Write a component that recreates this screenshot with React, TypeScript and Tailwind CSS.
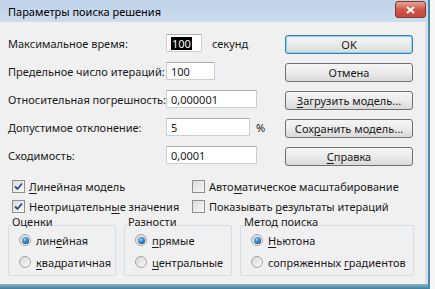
import React from 'react';

const Mn: React.FC<{ text: string; at: number }> = ({ text, at }) => (
  <>
    {text.slice(0, at)}
    <span className="underline underline-offset-2">{text.charAt(at)}</span>
    {text.slice(at + 1)}
  </>
);

const Field: React.FC<{ width: string; children?: React.ReactNode }> = ({ width, children }) => (
  <div
    className={`${width} h-[18px] bg-white border border-[#c8ced6] border-t-[#abadb3] flex items-center pl-[4px] text-[11px] leading-none`}
  >
    {children}
  </div>
);

const Button: React.FC<{ children: React.ReactNode; primary?: boolean }> = ({ children, primary }) => (
  <div
    className={`w-[128px] h-[19px] rounded-[3px] border ${
      primary ? 'border-[#3c7fb1] shadow-[inset_0_0_0_1px_#7fd6f5]' : 'border-[#707070]'
    } bg-gradient-to-b from-[#f4f4f4] via-[#ebebeb] to-[#d9d9d9] flex items-center justify-center text-[11px] leading-none`}
  >
    {children}
  </div>
);

const CheckBox: React.FC<{ checked?: boolean; children: React.ReactNode }> = ({ checked, children }) => (
  <div className="flex items-center h-[20px]">
    <div className="w-[13px] h-[13px] border border-[#8e8f8f] bg-gradient-to-br from-[#dcdcdc] to-[#f8f8f8] flex items-center justify-center shrink-0">
      {checked && (
        <svg width="9" height="9" viewBox="0 0 9 9">
          <path d="M1 4.5 L3.5 7 L8 1.5" fill="none" stroke="#2b4d8c" strokeWidth="1.8" />
        </svg>
      )}
    </div>
    <span className="ml-[4px] text-[11px] leading-none whitespace-nowrap">{children}</span>
  </div>
);

const Radio: React.FC<{ checked?: boolean; children: React.ReactNode }> = ({ checked, children }) => (
  <div className="flex items-center h-[22px]">
    <div className="w-[12px] h-[12px] rounded-full border border-[#a6a6a6] bg-gradient-to-br from-[#d9d9d9] to-[#f7f7f7] flex items-center justify-center shrink-0">
      {checked && (
        <div className="w-[7px] h-[7px] rounded-full bg-[radial-gradient(circle_at_40%_35%,#8fd0f8,#1f6cb0_60%,#123d6c)]" />
      )}
    </div>
    <span className="ml-[5px] text-[11px] leading-none whitespace-nowrap">{children}</span>
  </div>
);

const Group: React.FC<{ title: string; width: string; children: React.ReactNode }> = ({ title, width, children }) => (
  <div className={`${width} flex flex-col`}>
    <div className="text-[11px] leading-none pl-[4px] h-[9px] relative z-10">{title}</div>
    <div className="border border-[#d5dfe5] rounded-[2px] pt-[3px] pb-[2px] pl-[10px] flex flex-col">{children}</div>
  </div>
);

const Row: React.FC<{ label: string; children: React.ReactNode }> = ({ label, children }) => (
  <div className="flex items-center h-[18px]">
    <div className="w-[158px] text-[11px] leading-none whitespace-nowrap">{label}</div>
    {children}
  </div>
);

const App: React.FC = () => {
  return (
    <div className="w-[435px] h-[289px] bg-[#f7f7f7] overflow-hidden font-['Noto_Sans',sans-serif] text-[#1a1a1a]">
      <div className="w-[430px] h-[289px] flex flex-col border-r-2 border-[#4b8aa2]">
        {/* title bar */}
        <div className="h-[22px] shrink-0 flex items-center justify-between bg-gradient-to-b from-[#bfd2e9] to-[#ccdbed] pl-[8px] pr-[2px]">
          <span className="text-[11px] leading-none text-black">Параметры поиска решения</span>
          <div className="w-[31px] h-[17px] mb-[3px] rounded-[3px] border border-[#7c3a33] bg-gradient-to-b from-[#e8a493] via-[#d0584a] to-[#c4463a] flex items-center justify-center">
            <svg width="9" height="8" viewBox="0 0 9 8">
              <path d="M1 1 L8 7 M8 1 L1 7" stroke="white" strokeWidth="2" />
            </svg>
          </div>
        </div>

        {/* body */}
        <div className="flex-1 bg-[#f0f0f0] border-r-[3px] border-[#d3e0ee] pl-[8px] pt-[12px]">
          <div className="flex">
            <div className="w-[277px] flex flex-col gap-[10px]">
              <Row label="Максимальное время:">
                <Field width="w-[36px]">
                  <span className="bg-black text-white px-[1px] py-[1px]">100</span>
                </Field>
                <span className="ml-[10px] text-[11px] leading-none">секунд</span>
              </Row>
              <Row label="Предельное число итераций:">
                <Field width="w-[49px]">100</Field>
              </Row>
              <Row label="Относительная погрешность:">
                <Field width="w-[91px]">0,000001</Field>
              </Row>
              <Row label="Допустимое отклонение:">
                <Field width="w-[84px]">5</Field>
                <span className="ml-[6px] text-[11px] leading-none">%</span>
              </Row>
              <Row label="Сходимость:">
                <Field width="w-[91px]">0,0001</Field>
              </Row>
            </div>
            <div className="flex flex-col gap-[9px] pt-[1px]">
              <Button primary>OK</Button>
              <Button>Отмена</Button>
              <Button>
                <Mn text="Загрузить модель..." at={0} />
              </Button>
              <Button>
                <Mn text="Сохранить модель..." at={3} />
              </Button>
              <Button>
                <Mn text="Справка" at={0} />
              </Button>
            </div>
          </div>

          <div className="flex mt-[10px] pl-[4px]">
            <div className="w-[180px] flex flex-col">
              <CheckBox checked>
                <Mn text="Линейная модель" at={0} />
              </CheckBox>
              <CheckBox checked>
                <Mn text="Неотрицательные значения" at={13} />
              </CheckBox>
            </div>
            <div className="flex flex-col">
              <CheckBox>
                <Mn text="Автоматическое масштабирование" at={4} />
              </CheckBox>
              <CheckBox>
                Показывать <Mn text="результаты итераций" at={0} />
              </CheckBox>
            </div>
          </div>

          <div className="flex gap-[8px]">
            <Group title="Оценки" width="w-[108px]">
              <Radio checked>
                <Mn text="линейная" at={3} />
              </Radio>
              <Radio>
                <Mn text="квадратичная" at={0} />
              </Radio>
            </Group>
            <Group title="Разности" width="w-[108px]">
              <Radio checked>
                <Mn text="прямые" at={0} />
              </Radio>
              <Radio>
                <Mn text="центральные" at={0} />
              </Radio>
            </Group>
            <Group title="Метод поиска" width="w-[174px]">
              <Radio checked>
                <Mn text="Ньютона" at={0} />
              </Radio>
              <Radio>
                сопряженных <Mn text="градиентов" at={0} />
              </Radio>
            </Group>
          </div>
        </div>
        <div className="h-[5px] shrink-0 bg-gradient-to-b from-[#8cb6c8] to-[#3d7d97]" />
      </div>
    </div>
  );
};

export default App;
